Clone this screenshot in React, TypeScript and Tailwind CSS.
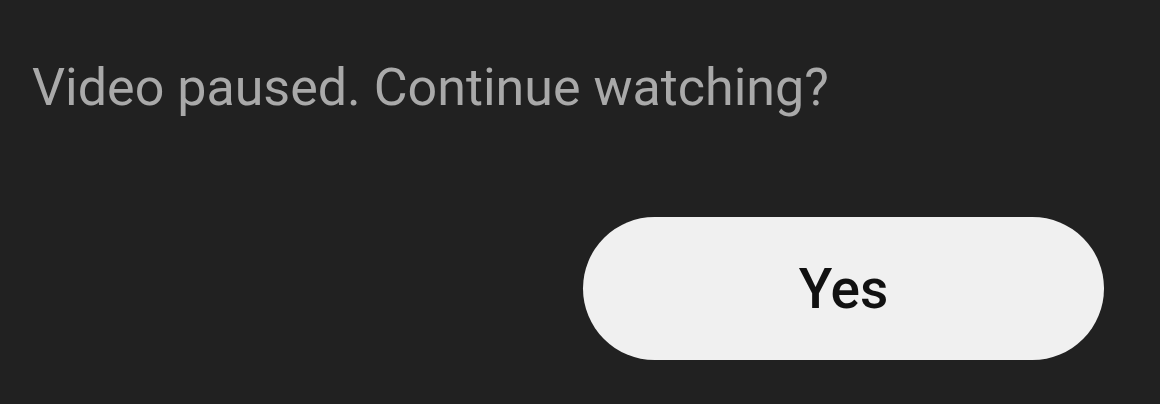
import React from "react";

export default function App() {
  return (
    <div
      className="w-[1160px] h-[404px] bg-[#212121] flex flex-col overflow-hidden"
      style={{ fontFamily: "Roboto, 'Liberation Sans', sans-serif" }}
    >
      <div className="pl-[32px] pt-[56px] text-[52px] leading-[64px] text-[#a9a9a9]">
        Video paused. Continue watching?
      </div>
      <div className="flex justify-end pr-[56px] mt-[97px]">
        <button className="w-[521px] h-[143px] rounded-full bg-[#f0f0f0] text-[#111111] text-[55px] font-medium flex items-center justify-center pt-[1px]">
          Yes
        </button>
      </div>
    </div>
  );
}
